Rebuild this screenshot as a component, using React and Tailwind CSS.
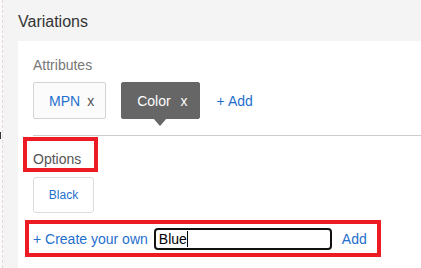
import React from 'react';

const blue = 'text-[#1f6fce]';

const Chip = ({ label, active, gap }) => (
  <div
    className={`relative h-[37px] flex items-center pl-[15px] pr-[11px] rounded-[2px] border ${
      active ? 'bg-[#666666] border-[#666666] text-white' : 'bg-[#fbfbfb] border-[#d4d4d4]'
    }`}
  >
    <span className={active ? 'text-white' : blue}>{label}</span>
    <span className={`${gap} ${active ? 'text-white' : 'text-[#555]'}`}>x</span>
    {active && (
      <div className="absolute top-full left-1/2 -translate-x-1/2 w-0 h-0 border-l-[7px] border-r-[7px] border-t-[8px] border-l-transparent border-r-transparent border-t-[#666666]"></div>
    )}
  </div>
);

const App = () => {
  return (
    <div className="flex w-[421px] h-[268px] overflow-hidden bg-[#f4f4f4] text-[14px] leading-[20px] font-['Liberation_Sans',Arial,sans-serif]">
      {/* left page edge */}
      <div className="w-[3px] shrink-0 bg-[#fafafa] border-r border-dashed border-[#e6d6d6] relative">
        <div className="absolute left-0 top-[132px] w-[1px] h-[7px] bg-[#333]"></div>
      </div>

      <div className="flex-1 flex flex-col pl-[15px] pt-[12px]">
        <h2 className="text-[16px] leading-[20px] text-[#333] mb-[9px]">Variations</h2>

        <div className="flex-1 bg-white pl-[15px] pt-[14px]">
          {/* Attributes */}
          <div className="text-[#777]">Attributes</div>
          <div className="flex items-center mt-[7px]">
            <Chip label="MPN" gap="ml-[7px]" />
            <div className="ml-[15px]">
              <Chip label="Color" active gap="ml-[10px]" />
            </div>
            <span className={`ml-[17px] ${blue}`}>+ Add</span>
          </div>

          <div className="mt-[16px] h-px bg-[#cccccc]"></div>

          {/* Options */}
          <div className="mt-px -ml-[10px] w-[75px] h-[35px] border-4 border-[#ed1c24] pl-[6px] pt-[8px]">
            <span className="text-[#555]">Options</span>
          </div>

          <div className={`mt-[5px] w-[61px] h-[36px] border border-[#dddddd] rounded-[3px] flex items-center justify-center text-[12px] ${blue}`}>
            Black
          </div>

          <div className="mt-[7px] -ml-[8px] w-[356px] h-[37px] border-4 border-[#ed1c24] flex items-center pl-[4px]">
            <span className={blue}>+ Create your own</span>
            <div className="ml-[6px] w-[178px] h-[22px] border-2 border-[#111] rounded-[4px] flex items-center pl-[3px] text-black">
              <span>Blue</span>
              <span className="w-px h-[16px] bg-black"></span>
            </div>
            <span className={`ml-[10px] ${blue}`}>Add</span>
          </div>
        </div>
      </div>
    </div>
  );
};

export default App;
